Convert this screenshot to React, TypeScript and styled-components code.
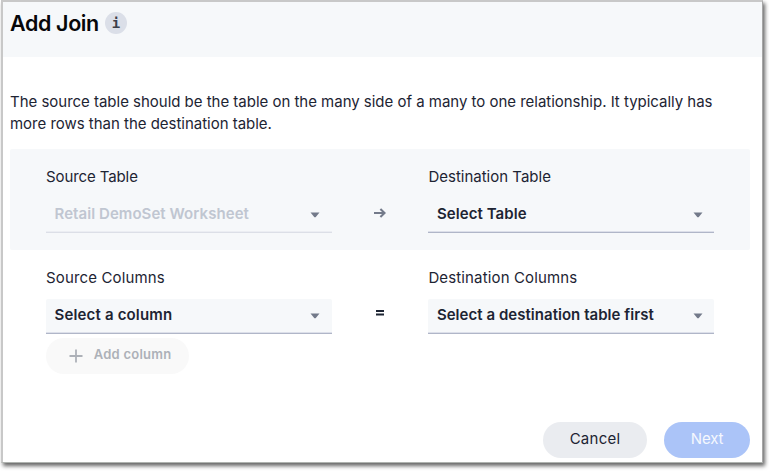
import React from "react";
import styled, { createGlobalStyle } from "styled-components";

const GlobalStyle = createGlobalStyle`
  * { box-sizing: border-box; }
  body {
    margin: 0;
    background: #fff;
    font-family: Inter, "Liberation Sans", sans-serif;
    color: #1d2433;
  }
`;

const Page = styled.div`
  height: 471px;
  padding: 0 0 0 1px;
  overflow: hidden;
`;

const Dialog = styled.section`
  width: 762px;
  height: 463px;
  border: 2px solid #c8c8c8;
  border-right: 1px solid #a6a6a6;
  border-bottom: 1px solid #b0b4b0;
  background: #fff;
  box-shadow: 2px 3px 4px rgba(0, 0, 0, 0.6);
  display: flex;
  flex-direction: column;
`;

const Header = styled.header`
  height: 55px;
  flex: none;
  padding: 8px 7px 0;
  background: #f6f8fa;
  display: flex;
  align-items: flex-start;
`;

const Title = styled.h1`
  margin: 0;
  width: 95px;
  font-size: 21.5px;
  line-height: 26px;
  font-weight: 600;
  letter-spacing: -0.38px;
  color: #060709;
  white-space: nowrap;
`;

const Info = styled.span`
  width: 22px;
  height: 22px;
  margin-top: 2px;
  border-radius: 50%;
  background: #dbdfe8;
  color: #3c4049;
  font: bold 14px/22px "DejaVu Sans Mono", monospace;
  text-align: center;
`;

const Body = styled.main`
  flex: 1;
  padding: 34px 12px 4px 7px;
  display: flex;
  flex-direction: column;
`;

const Description = styled.p`
  margin: 0 0 14px;
  font-size: 15px;
  line-height: 22px;
  letter-spacing: -0.02px;
  white-space: nowrap;
`;

const JoinRow = styled.div<{ $shaded?: boolean }>`
  height: ${(p) => (p.$shaded ? 101 : 88)}px;
  padding: 16px 35px 0 36px;
  border-radius: 2px;
  background: ${(p) => (p.$shaded ? "#f6f8fa" : "transparent")};
  display: grid;
  grid-template-columns: 286px 96.4px 286px;
  align-items: start;
`;

const Label = styled.div<{ $tracking: number }>`
  height: 33px;
  padding-top: 1px;
  font-size: 15px;
  line-height: 22px;
  letter-spacing: ${(p) => p.$tracking}px;
  white-space: nowrap;
`;

const Select = styled.div<{ $disabled?: boolean; $tracking: number }>`
  height: 35px;
  padding: 0 11.9px 4px 8.5px;
  border-bottom: 1px solid ${(p) => (p.$disabled ? "#dcdfe7" : "#b0b6c8")};
  box-shadow: inset 0 -1px ${(p) => (p.$disabled ? "#eceef3" : "#dde0ea")};
  border-radius: 2px 2px 0 0;
  background: #f6f8fa;
  color: ${(p) => (p.$disabled ? "#c0c6d1" : "#1d2433")};
  font-size: 15px;
  font-weight: 600;
  letter-spacing: ${(p) => p.$tracking}px;
  white-space: nowrap;
  display: flex;
  align-items: center;
  justify-content: space-between;
`;

const Caret = styled.svg`
  width: 10px;
  height: 6px;
  margin-top: 4px;
  flex: none;
`;

const Operator = styled.div<{ $lift: number }>`
  height: 68px;
  padding: 32px 0 ${(p) => p.$lift}px;
  display: flex;
  align-items: center;
  justify-content: center;
`;

const AddButton = styled.button`
  width: 143px;
  height: 36px;
  flex: none;
  margin-left: 36px;
  padding: 0 17.5px 4px 23px;
  border: 0;
  border-radius: 18px;
  background: #f9f9f9;
  color: #adb1b8;
  font: 600 13px Inter, sans-serif;
  letter-spacing: 0.25px;
  white-space: nowrap;
  display: flex;
  align-items: center;
  justify-content: space-between;
`;

const Plus = styled.svg`
  width: 14px;
  height: 14px;
  margin-top: 3px;
`;

const Footer = styled.footer`
  margin-top: auto;
  display: flex;
  justify-content: flex-end;
  gap: 17px;
`;

const Action = styled.button<{ $primary?: boolean }>`
  width: ${(p) => (p.$primary ? 86 : 104)}px;
  height: 36px;
  padding: 0 0 3px;
  border: 0;
  border-radius: 18px;
  background: ${(p) => (p.$primary ? "#abc4f8" : "#eaecf0")};
  color: ${(p) => (p.$primary ? "#f5f8fe" : "#1d2433")};
  font: 15px Inter, sans-serif;
  letter-spacing: ${(p) => (p.$primary ? -0.15 : 0.25)}px;
`;

function Picker(props: {
  label: string;
  value: string;
  disabled?: boolean;
  labelTracking?: number;
  tracking?: number;
}) {
  return (
    <div>
      <Label $tracking={props.labelTracking ?? 0}>{props.label}</Label>
      <Select $disabled={props.disabled} $tracking={props.tracking ?? 0}>
        {props.value}
        <Caret viewBox="0 0 10 6">
          <path d="M.5.5h9L5.6 5.2H4.4z" fill="#737a8a" />
        </Caret>
      </Select>
    </div>
  );
}

export default function App() {
  return (
    <Page>
      <GlobalStyle />
      <Dialog>
        <Header>
          <Title>Add Join</Title>
          <Info>i</Info>
        </Header>
        <Body>
          <Description>
            The source table should be the table on the many side of a many to one relationship. It typically has
            <br />
            more rows than the destination table.
          </Description>
          <JoinRow $shaded>
            <Picker label="Source Table" labelTracking={-0.1} value="Retail DemoSet Worksheet" tracking={0.06} disabled />
            <Operator $lift={5}>
              <svg width="12" height="10" viewBox="0 0 12 10">
                <path d="M0 5h10.5M6.4 1l4.2 4-4.2 4" fill="none" stroke="#737a8a" strokeWidth="2.1" />
              </svg>
            </Operator>
            <Picker label="Destination Table" value="Select Table" tracking={0.08} />
          </JoinRow>
          <JoinRow>
            <Picker label="Source Columns" labelTracking={0.14} value="Select a column" tracking={0.17} />
            <Operator $lift={6}>
              <svg width="8" height="6" viewBox="0 0 8 6">
                <path d="M0 1h8M0 4.5h8" stroke="#1d2433" strokeWidth="1.9" />
              </svg>
            </Operator>
            <Picker label="Destination Columns" labelTracking={0.14} value="Select a destination table first" tracking={0.04} />
          </JoinRow>
          <AddButton>
            <Plus viewBox="0 0 14 14">
              <path d="M7 .5v13M.5 7h13" stroke="#adb1b8" strokeWidth="1.8" />
            </Plus>
            Add column
          </AddButton>
          <Footer>
            <Action>Cancel</Action>
            <Action $primary>Next</Action>
          </Footer>
        </Body>
      </Dialog>
    </Page>
  );
}
